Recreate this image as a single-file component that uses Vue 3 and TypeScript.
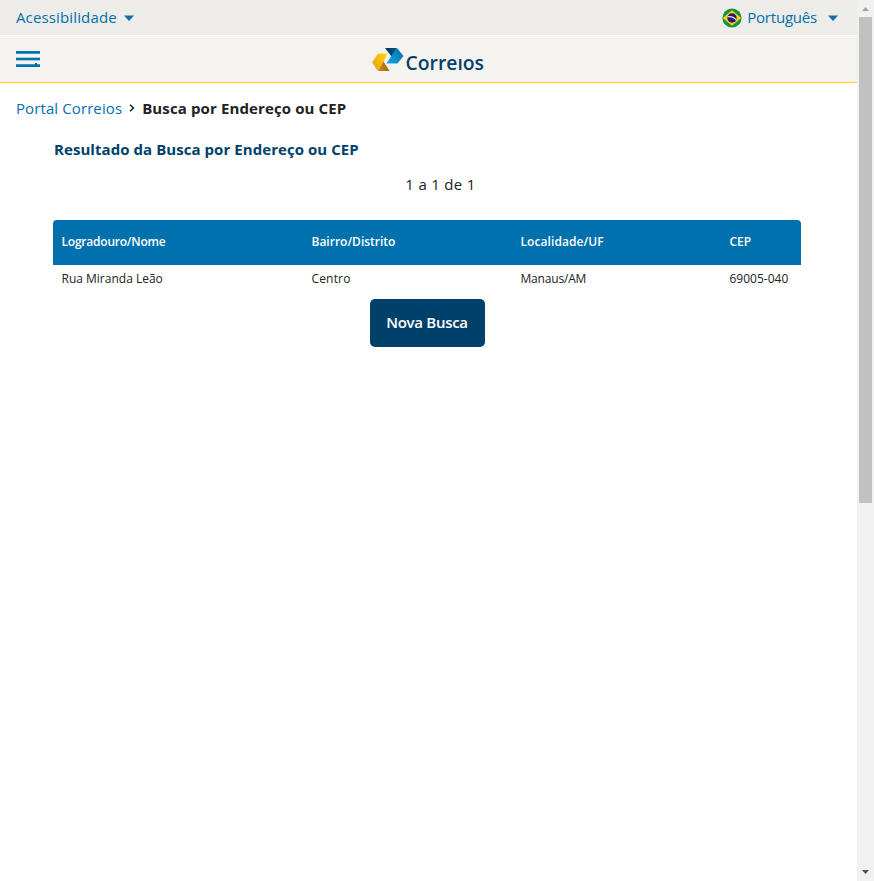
<script setup lang="ts">
interface Address {
  street: string
  district: string
  city: string
  cep: string
}

const rows: Address[] = [
  { street: 'Rua Miranda Leão', district: 'Centro', city: 'Manaus/AM', cep: '69005-040' },
]
</script>

<template>
  <div class="window">
    <div class="page">
      <div class="topbar">
        <a class="access"><span class="t-access">Acessibilidade</span><svg class="caret" width="10" height="6" viewBox="0 0 10 6"><path d="M0 0.5H10L5 6Z" fill="#0071ad" /></svg></a>
        <a class="lang">
          <svg class="flag" width="20" height="20" viewBox="0 0 20 20">
            <circle cx="10" cy="10" r="9.6" fill="#119441" />
            <path d="M.8 10L10 2.2L19.2 10L10 17.8Z" fill="#fcd019" />
            <circle cx="10" cy="10" r="4.7" fill="#2b1770" />
            <path d="M5.6 8.7Q11 8 14.2 11.8" fill="none" stroke="#e9e7f0" stroke-width="1.1" />
          </svg>
          <span class="t-lang">Português</span>
          <svg class="caret" width="10" height="6" viewBox="0 0 10 6"><path d="M0 0.5H10L5 6Z" fill="#0071ad" /></svg>
        </a>
      </div>
      <header class="header">
        <svg class="menu" width="24" height="16" viewBox="0 0 24 16">
          <path d="M0 0H24V2H0ZM0 7H24V9H0ZM0 14H24V16H0Z" fill="#0071ad" />
          <path d="M0 2H24V3H0ZM0 13H24V14H0Z" fill="#3d93c0" />
          <path d="M0 6H24V7H0ZM0 9H24V10H0Z" fill="#a5cbdf" />
          <path d="M19 12H21V14H19Z" fill="#0071ad" />
        </svg>
        <svg class="logo" width="118" height="34" viewBox="0 0 118 34">
          <defs>
            <linearGradient id="gold" x1="0" y1="1" x2="1" y2="0"><stop offset="0" stop-color="#e79d0c" /><stop offset="1" stop-color="#ffd51a" /></linearGradient>
            <linearGradient id="amber" x1="0" y1="0" x2="1" y2="0"><stop offset="0" stop-color="#d08f13" /><stop offset="1" stop-color="#9c640d" /></linearGradient>
            <linearGradient id="sky" x1="0" y1="1" x2="1" y2="0"><stop offset="0" stop-color="#1ba5e2" /><stop offset="1" stop-color="#006fa8" /></linearGradient>
            <linearGradient id="navy" x1="0" y1="0" x2="1" y2="0"><stop offset="0" stop-color="#00335a" /><stop offset="1" stop-color="#00578a" /></linearGradient>
          </defs>
          <path d="M7 6.5H16.5L12.5 15L7 24L1 15.5Z" fill="url(#gold)" />
          <path d="M12.5 14.5L18.5 24H7Z" fill="url(#amber)" />
          <path d="M14 1H26L20.5 9.5Z" fill="url(#navy)" />
          <path d="M26 1L32.5 9L26.5 16.5H15.5L20 9.5Z" fill="url(#sky)" />
          <text x="34.5" y="22.8" textLength="78.5" lengthAdjust="spacingAndGlyphs">Correıos</text>
        </svg>
      </header>
      <nav class="crumbs">
        <a class="t-home">Portal Correios</a>
        <svg width="6" height="8" viewBox="0 0 6 8"><path d="M1 .7L4.5 4L1 7.3" fill="none" stroke="#222" stroke-width="1.5" /></svg>
        <strong class="t-here">Busca por Endereço ou CEP</strong>
      </nav>
      <main>
        <h1><span class="t-title">Resultado da Busca por Endereço ou CEP</span></h1>
        <p class="count"><span class="t-count">1 a 1 de 1</span></p>
        <table>
          <thead>
            <tr>
              <th class="c1"><span class="n1">Logradouro/Nome</span></th>
              <th class="c2">Bairro/Distrito</th>
              <th class="c3"><span class="n3">Localidade/UF</span></th>
              <th class="c4">CEP</th>
            </tr>
          </thead>
          <tbody>
            <tr v-for="row in rows" :key="row.cep">
              <td>{{ row.street }}</td>
              <td><span class="d2">{{ row.district }}</span></td>
              <td><span class="d3">{{ row.city }}</span></td>
              <td>{{ row.cep }}</td>
            </tr>
          </tbody>
        </table>
        <button type="button">Nova Busca</button>
      </main>
    </div>
    <div class="scroll">
      <svg width="17" height="17" viewBox="0 0 17 17"><path d="M5 11L8.5 7L12 11Z" fill="#a3a3a3" /></svg>
      <div class="thumb"></div>
      <svg class="down" width="17" height="17" viewBox="0 0 17 17"><path d="M5 6H12L8.5 10Z" fill="#505050" /></svg>
    </div>
  </div>
</template>

<style>
body {
  background: #fff;
  overflow: hidden;
}
</style>

<style scoped>
.window {
  display: flex;
  height: 881px;
  font-family: "Open Sans", "Noto Sans", sans-serif;
  font-size: 15px;
  color: #222;
  white-space: nowrap;
}
.page {
  flex: 1;
  min-width: 0;
}
.topbar {
  box-sizing: border-box;
  height: 36px;
  padding: 0 19px 0 16px;
  border-bottom: 1px solid #fff;
  background: #edece8;
  color: #0071ad;
  display: flex;
  justify-content: space-between;
  align-items: center;
}
.access, .lang {
  display: flex;
  align-items: center;
}
.access { gap: 7px; }
.t-access { letter-spacing: 0.14px; }
.t-lang { letter-spacing: -0.2px; }
.t-access, .t-lang { padding-bottom: 2px; }
.lang .caret { margin-left: 11px; }
.flag { margin-right: 5px; }
.header {
  box-sizing: border-box;
  height: 47px;
  border-bottom: 1px solid #ffd400;
  background: #f4f3ef;
  display: flex;
  align-items: flex-start;
  padding: 11px 16px 0;
}
.menu { margin-top: 4px; }
.logo { margin-left: 331px; }
.logo text {
  font: 600 20px "Open Sans", sans-serif;
  fill: #00416b;
}
.crumbs {
  display: flex;
  align-items: center;
  height: 20px;
  padding: 15px 16px 0;
  gap: 7px;
}
.t-home {
  color: #0071ad;
  letter-spacing: 0.1px;
}
.t-here {
  font-weight: 700;
  letter-spacing: 0.12px;
}
main { padding: 0 56px 0 53px; }
h1 {
  margin: 21px 0 0;
  padding-left: 1px;
  font-size: 15px;
  font-weight: 700;
  line-height: 20px;
  letter-spacing: 0.06px;
  color: #00416b;
}
.count {
  margin: 15px 0 26px;
  padding-left: 27px;
  line-height: 20px;
  letter-spacing: 0.3px;
  text-align: center;
}
table {
  width: 748px;
  table-layout: fixed;
  border-collapse: separate;
  border-spacing: 0;
  font-size: 12px;
}
th {
  height: 45px;
  padding: 0 0 2px 8.5px;
  box-sizing: border-box;
  background: #0071ad;
  color: #fff;
  text-align: left;
  font-weight: 600;
}
th:first-child { border-top-left-radius: 4px; }
th:last-child { border-top-right-radius: 4px; }
.c1 { width: 250px; }
.c2 { width: 209px; }
.c3 { width: 209px; }
.n1 { letter-spacing: -0.22px; }
.n3 { letter-spacing: 0.08px; }
.d2 { letter-spacing: 0.16px; }
.d3 { letter-spacing: -0.18px; }
td {
  height: 34px;
  padding: 0 0 8px 8.5px;
  box-sizing: border-box;
}
button {
  display: block;
  width: 115px;
  height: 48px;
  margin: 0 auto;
  padding: 0 0 2px;
  border: 0;
  border-radius: 5px;
  background: #00416b;
  color: #fff;
  font: 600 15px "Open Sans", sans-serif;
  letter-spacing: -0.3px;
}
.scroll {
  width: 17px;
  background: #f1f1f1;
  display: flex;
  flex-direction: column;
}
.thumb {
  width: 13px;
  height: 486px;
  margin-left: 2px;
  background: #c1c1c1;
}
.down { margin-top: auto; }
</style>
